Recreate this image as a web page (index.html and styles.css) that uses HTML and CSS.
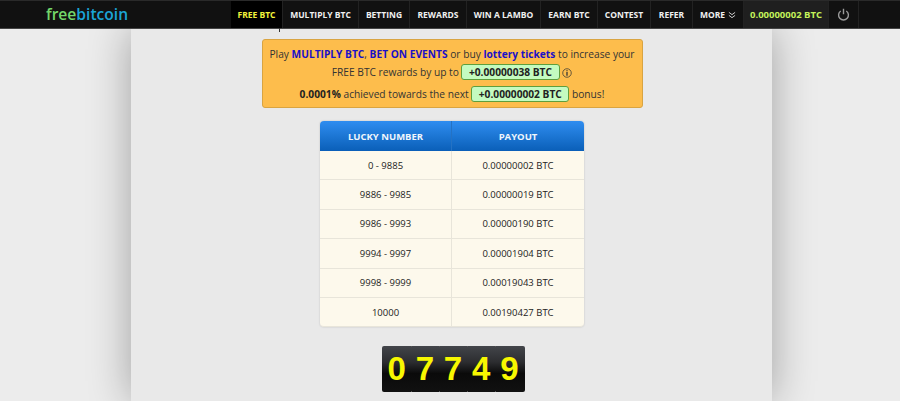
FILE: index.html
```html
<!DOCTYPE html>
<html lang="en">
<head>
    <meta charset="UTF-8">
    <meta name="viewport" content="width=device-width, initial-scale=1.0">
    <title>FreeBitco.in</title>
    <link rel="stylesheet" href="styles.css">
</head>
<body>
    <!-- Top bar -->
    <nav class="top-bar">
        <a class="logo"><span class="logo-free">free</span><span class="logo-bitcoin">bitcoin</span></a>
        <ul class="menu">
            <li class="menu-item active">FREE BTC</li>
            <li class="menu-item item-multiply">MULTIPLY BTC</li>
            <li class="menu-item item-betting">BETTING</li>
            <li class="menu-item item-rewards">REWARDS</li>
            <li class="menu-item item-lambo">WIN A LAMBO</li>
            <li class="menu-item item-earn">EARN BTC</li>
            <li class="menu-item item-contest">CONTEST</li>
            <li class="menu-item item-refer">REFER</li>
            <li class="menu-item item-more">MORE
                <svg class="more-icon" viewBox="0 0 9 8" width="8" height="8">
                    <path d="M1 1l3.5 2.6L8 1M1 4.4L4.500 7 8 4.400" fill="none" stroke="#ddd" stroke-width="1"/>
                </svg>
            </li>
            <li class="menu-item balance">0.00000002 BTC</li>
            <li class="menu-item logout">
                <svg viewBox="0 0 14 14" width="13" height="13">
                    <path d="M4 3.200a5.300 5.300 0 1 0 6 0M7 .8v6" fill="none" stroke="#9a9a9a" stroke-width="1.500"/>
                </svg>
            </li>
        </ul>
    </nav>

    <div class="page">
        <div class="content">
            <div class="promo-box">
                <p class="promo-line">Play <a class="promo-link">MULTIPLY BTC</a>, <a class="promo-link">BET ON EVENTS</a> or buy <a class="promo-link">lottery tickets</a> to increase your</p>
                <p class="promo-line">FREE BTC rewards by up to <span class="btc-pill">+0.00000038 BTC</span>
                    <svg class="info-icon" viewBox="0 0 11 11" width="10" height="10">
                        <circle cx="5.500" cy="5.500" r="4.700" fill="none" stroke="#333" stroke-width=".8"/>
                        <path d="M5.500 2.500v1M5.500 4.500v4" stroke="#333" stroke-width="1.400"/>
                    </svg>
                </p>
                <p class="promo-line promo-bonus"><b>0.0001%</b> achieved towards the next <span class="btc-pill">+0.00000002 BTC</span> bonus!</p>
            </div>

            <table class="payout-table">
                <thead>
                    <tr><th>LUCKY NUMBER</th><th>PAYOUT</th></tr>
                </thead>
                <tbody>
                    <tr><td>0 - 9885</td><td>0.00000002 BTC</td></tr>
                    <tr><td>9886 - 9985</td><td>0.00000019 BTC</td></tr>
                    <tr><td>9986 - 9993</td><td>0.00000190 BTC</td></tr>
                    <tr><td>9994 - 9997</td><td>0.00001904 BTC</td></tr>
                    <tr><td>9998 - 9999</td><td>0.00019043 BTC</td></tr>
                    <tr><td>10000</td><td>0.00190427 BTC</td></tr>
                </tbody>
            </table>

            <div class="counter">
                <span class="digit">0</span>
                <span class="digit">7</span>
                <span class="digit">7</span>
                <span class="digit">4</span>
                <span class="digit">9</span>
            </div>
        </div>
    </div>
</body>
</html>
```

FILE: styles.css
```css
* {
    box-sizing: border-box;
}

html, body {
    height: 100%;
}

body {
    margin: 0;
    background: #ececec;
    font-family: "Open Sans", sans-serif;
    color: #222;
    overflow: hidden;
}

/* top bar */
.top-bar {
    position: relative;
    z-index: 2;
    display: flex;
    height: 29px;
    padding-left: 46px;
    background: #111;
    border-top: 1px solid #2a2a2a;
    border-bottom: 1px solid #444;
}

.logo {
    width: 185px;
    font-family: "Open Sans", sans-serif;
    font-size: 15.600px;
    font-weight: 600;
    line-height: 27px;
}

.logo-free {
    color: #74d76b;
}

.logo-bitcoin {
    color: #1ba5d6;
}

.menu {
    display: flex;
    margin: 0;
    padding: 0;
    list-style: none;
}

.menu-item {
    display: flex;
    align-items: center;
    justify-content: center;
    gap: 3px;
    height: 27px;
    width: 52px;
    font-size: 8.500px;
    font-weight: 700;
    color: #f0f0f0;
    border-right: 1px solid #222;
}

.menu-item.active {
    position: relative;
    background: #000;
    color: #f4f43c;
}

/* small stray tick under the active tab */
.menu-item.active::after {
    content: "";
    position: absolute;
    left: 48px;
    top: 27px;
    width: 1px;
    height: 4px;
    background: #333;
}

.item-multiply { width: 76px; }
.item-betting { width: 51px; }
.item-rewards { width: 57px; }
.item-lambo { width: 74px; }
.item-earn { width: 57px; }
.item-contest { width: 53px; }
.item-refer { width: 42px; }
.item-more { width: 51px; }

.balance {
    width: 85px;
    font-size: 9.500px;
    color: #c4f25a;
    background: #1f1f1f;
}

.logout {
    width: 30px;
}

/* main column */
.page {
    height: 372px;
    margin-left: 131px;
    width: 641px;
    background: #e9e9e9;
    box-shadow: 0 0 40px rgba(0, 0, 0, .32);
}

.content {
    display: flex;
    flex-direction: column;
    align-items: center;
    padding: 10px 0 0 1px;
}

.promo-box {
    width: 381px;
    height: 69px;
    padding-top: 5px;
    background: #fdbd4c;
    border: 1px solid #d9a441;
    border-radius: 3px;
    text-align: center;
    font-size: 10.200px;
    color: #333;
}

.promo-line {
    margin: 0;
    height: 18px;
    line-height: 18px;
    white-space: nowrap;
}

.promo-bonus {
    margin-top: 3px;
    height: 20px;
    line-height: 20px;
}

.promo-bonus b {
    color: #222;
}

.promo-link {
    color: #1a10c8;
    font-weight: 700;
}

.btc-pill {
    display: inline-block;
    height: 16px;
    line-height: 14px;
    padding: 0 6.500px;
    background: #c4fbc0;
    border: 1px solid #5f9e3c;
    border-radius: 3px;
    font-weight: 700;
    color: #222;
}

.info-icon {
    vertical-align: -2px;
}

/* payout table */
.payout-table {
    width: 264px;
    margin-top: 13px;
    border-collapse: separate;
    border-spacing: 0;
    table-layout: fixed;
    border-radius: 4px;
    font-size: 9.500px;
    text-align: center;
    box-shadow: 0 0 2px rgba(0, 0, 0, .2);
}

.payout-table th {
    height: 30px;
    padding: 0;
    background: linear-gradient(to bottom, #2f8df0, #0a5fb8);
    color: #f0f6fc;
    font-size: 9.500px;
    font-weight: 700;
    border-right: 1px solid #2472c4;
}

.payout-table th:first-child {
    border-top-left-radius: 4px;
    width: 132px;
}

.payout-table th:last-child {
    border-top-right-radius: 4px;
    border-right: 0;
}

.payout-table td {
    height: 29.400px;
    padding: 0;
    background: #fdf9ec;
    border-right: 1px solid #e8e5da;
    border-bottom: 1px solid #e8e5da;
    color: #222;
}

.payout-table td:last-child {
    border-right: 0;
}

.payout-table tr:last-child td:first-child {
    border-bottom-left-radius: 4px;
}

.payout-table tr:last-child td:last-child {
    border-bottom-right-radius: 4px;
}

/* lucky number counter */
.counter {
    display: flex;
    justify-content: center;
    width: 143px;
    height: 46px;
    margin-top: 19px;
    margin-left: 2px;
    border-radius: 2px;
    background: linear-gradient(to bottom, #43454a, #2c2d30 35%, #0a0a0a 60%, #111);
    overflow: hidden;
}

.digit {
    position: relative;
    width: 28.200px;
    text-align: center;
    font-family: "Liberation Sans", sans-serif;
    font-size: 33px;
    font-weight: 700;
    line-height: 46px;
    color: #f7f700;
}

/* little gaps between the counter drums */
.digit + .digit::before,
.digit + .digit::after {
    content: "";
    position: absolute;
    left: 0;
    width: 1px;
    height: 1px;
    background: #555;
}

.digit + .digit::before {
    top: 0;
}

.digit + .digit::after {
    bottom: 0;
}
```
